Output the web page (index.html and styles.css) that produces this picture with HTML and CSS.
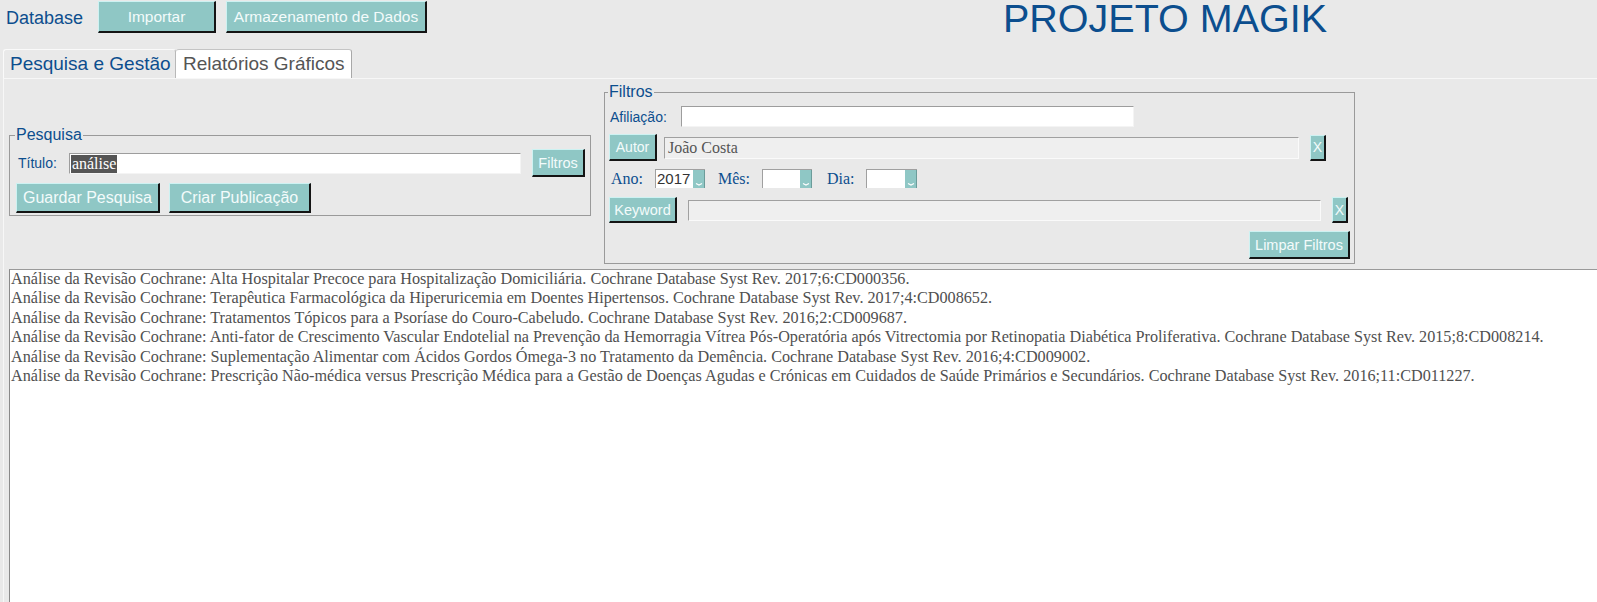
FILE: index.html
```html
<!DOCTYPE html>
<html lang="pt">
<head>
<meta charset="utf-8">
<title>Projeto Magik</title>
<link rel="stylesheet" href="styles.css">
</head>
<body>
<div class="topbar">
  <span class="brand">Database</span>
  <button class="btn btn-top btn-import">Importar</button>
  <button class="btn btn-top btn-store">Armazenamento de Dados</button>
  <h1 class="title">PROJETO MAGIK</h1>
</div>
<div class="tabs">
  <div class="tab tab-active">Pesquisa e Gestão</div>
  <div class="tab tab-other">Relatórios Gráficos</div>
</div>
<div class="panel">
  <div class="forms">
    <fieldset class="box box-search">
      <legend class="legend">Pesquisa</legend>
      <div class="row row-title">
        <span class="lbl lbl-title">Título:</span>
        <div class="field field-title"><span class="sel-text">análise</span></div>
        <button class="btn btn-filtros">Filtros</button>
      </div>
      <div class="row row-actions">
        <button class="btn btn-save">Guardar Pesquisa</button>
        <button class="btn btn-create">Criar Publicação</button>
      </div>
    </fieldset>
    <fieldset class="box box-filters">
      <legend class="legend">Filtros</legend>
      <div class="row row-afil">
        <span class="lbl lbl-afil">Afiliação:</span>
        <div class="field field-afil"></div>
      </div>
      <div class="row row-autor">
        <button class="btn btn-autor">Autor</button>
        <div class="field field-grey field-autor">João Costa</div>
        <button class="btn btn-x btn-x1">X</button>
      </div>
      <div class="row row-date">
        <span class="slbl slbl-ano">Ano:</span>
        <div class="select"><span class="select-val">2017</span><span class="select-arrow"><svg width="12" height="17" viewBox="0 0 12 17"><path d="M3 13.5 L6 15 L9 13.5" fill="none" stroke="#ffffff" stroke-width="1.2"/></svg></span></div>
        <span class="slbl slbl-mes">Mês:</span>
        <div class="select"><span class="select-val"></span><span class="select-arrow"><svg width="12" height="17" viewBox="0 0 12 17"><path d="M3 13.5 L6 15 L9 13.5" fill="none" stroke="#ffffff" stroke-width="1.2"/></svg></span></div>
        <span class="slbl slbl-dia">Dia:</span>
        <div class="select select-dia"><span class="select-val"></span><span class="select-arrow"><svg width="12" height="17" viewBox="0 0 12 17"><path d="M3 13.5 L6 15 L9 13.5" fill="none" stroke="#ffffff" stroke-width="1.2"/></svg></span></div>
      </div>
      <div class="row row-kw">
        <button class="btn btn-kw">Keyword</button>
        <div class="field field-grey field-kw"></div>
        <button class="btn btn-x btn-x2">X</button>
      </div>
      <div class="row row-clear">
        <button class="btn btn-clear">Limpar Filtros</button>
      </div>
    </fieldset>
  </div>
  <div class="results">
    <div class="res-line">Análise da Revisão Cochrane: Alta Hospitalar Precoce para Hospitalização Domiciliária. Cochrane Database Syst Rev. 2017;6:CD000356.</div>
    <div class="res-line">Análise da Revisão Cochrane: Terapêutica Farmacológica da Hiperuricemia em Doentes Hipertensos. Cochrane Database Syst Rev. 2017;4:CD008652.</div>
    <div class="res-line">Análise da Revisão Cochrane: Tratamentos Tópicos para a Psoríase do Couro-Cabeludo. Cochrane Database Syst Rev. 2016;2:CD009687.</div>
    <div class="res-line">Análise da Revisão Cochrane: Anti-fator de Crescimento Vascular Endotelial na Prevenção da Hemorragia Vítrea Pós-Operatória após Vitrectomia por Retinopatia Diabética Proliferativa. Cochrane Database Syst Rev. 2015;8:CD008214.</div>
    <div class="res-line">Análise da Revisão Cochrane: Suplementação Alimentar com Ácidos Gordos Ómega-3 no Tratamento da Demência. Cochrane Database Syst Rev. 2016;4:CD009002.</div>
    <div class="res-line">Análise da Revisão Cochrane: Prescrição Não-médica versus Prescrição Médica para a Gestão de Doenças Agudas e Crónicas em Cuidados de Saúde Primários e Secundários. Cochrane Database Syst Rev. 2016;11:CD011227.</div>
  </div>
</div>
</body>
</html>
```
FILE: styles.css
```css
html, body {
  margin: 0;
  padding: 0;
  height: 100%;
  overflow: hidden;
}
body {
  background: #e9e9e9;
  font-family: "Liberation Sans", Arial, sans-serif;
  color: #0c4e8e;
  display: flex;
  flex-direction: column;
}

/* top bar */
.topbar {
  display: flex;
  align-items: flex-start;
  height: 36px;
}
.brand {
  font-size: 18px;
  line-height: 20px;
  margin: 8px 0 0 6px;
  width: 78px;
  color: #0c4e8e;
}
.btn {
  font-family: "Liberation Sans", Arial, sans-serif;
  background: #8fc7c5;
  color: #f3fbfb;
  border-style: solid;
  border-width: 1px 2px 2px 1px;
  border-color: #cdf2f2 #141414 #141414 #cdf2f2;
  padding: 0;
  margin: 0;
  cursor: default;
  box-sizing: border-box;
  white-space: nowrap;
}
.btn-top {
  height: 32px;
  margin-top: 1px;
  font-size: 15.5px;
}
.btn-import {
  margin-left: 14px;
  width: 118px;
}
.btn-store {
  margin-left: 10px;
  width: 201px;
}
.title {
  margin: -4px 0 0 576px;
  font-weight: normal;
  font-size: 39.5px;
  line-height: 45px;
  color: #0c4e8e;
  white-space: nowrap;
}

/* tabs */
.tabs {
  display: flex;
  margin-top: 13px;
  padding-left: 3px;
  height: 29px;
}
.tab {
  box-sizing: border-box;
  height: 29px;
  font-size: 19px;
  line-height: 28px;
  border-radius: 3px 3px 0 0;
  white-space: nowrap;
}
.tab-active {
  width: 173px;
  padding-left: 6px;
  color: #0c4e8e;
  border-top: 1px solid #fafafa;
  border-left: 1px solid #fafafa;
  border-right: 1px solid #b8b8b8;
}
.tab-other {
  width: 176px;
  padding-left: 7px;
  background: #ffffff;
  color: #555555;
  border-top: 1px solid #c4c4c4;
  border-right: 1px solid #a8a8a8;
}

/* panel */
.panel {
  flex: 1;
  display: flex;
  flex-direction: column;
  margin-left: 3px;
  border-left: 1px solid #f7f7f7;
  border-top: 1px solid #f7f7f7;
  padding: 4px 0 0 5px;
}
.forms {
  display: flex;
  align-items: flex-start;
}
.box {
  box-sizing: border-box;
  margin: 0;
  border: 1px solid #9a9a9a;
  min-width: 0;
}
.legend {
  font-size: 16px;
  line-height: 18px;
  padding: 0 1px;
  margin-left: -1px;
  color: #0c4e8e;
}
.row {
  display: flex;
  align-items: center;
}
.lbl {
  font-size: 14px;
  color: #0c4e8e;
  white-space: nowrap;
}
.field {
  box-sizing: border-box;
  height: 21px;
  background: #ffffff;
  border-style: solid;
  border-width: 1px;
  border-color: #9d9d9d #f4f4f4 #f4f4f4 #9d9d9d;
}
.field-grey {
  background: #efefef;
  border-color: #a0a0a0 #fafafa #fafafa #a0a0a0;
}

/* search box */
.box-search {
  width: 582px;
  margin-top: 43px;
  padding: 5px 5px 2px 6px;
}
.row-title {
  height: 28px;
}
.lbl-title {
  margin-left: 2px;
  width: 51px;
}
.field-title {
  width: 453px;
  padding: 1px 0 0 1px;
}
.sel-text {
  display: inline-block;
  background: #555555;
  color: #ffffff;
  font-family: "Liberation Serif", Georgia, serif;
  font-size: 16px;
  line-height: 18px;
  padding: 0 1px;
}
.btn-filtros {
  margin-left: 11px;
  width: 53px;
  height: 28px;
  font-size: 14.5px;
}
.row-actions {
  margin-top: 6px;
}
.btn-save {
  width: 144px;
  height: 30px;
  font-size: 16px;
}
.btn-create {
  margin-left: 9px;
  width: 142px;
  height: 30px;
  font-size: 16px;
}

/* filters box */
.box-filters {
  width: 751px;
  margin-left: 13px;
  padding: 5px 4px 4px 4px;
}
.row-afil {
  height: 21px;
}
.lbl-afil {
  margin-left: 1px;
  width: 71px;
}
.field-afil {
  width: 453px;
}
.row-autor {
  margin-top: 7px;
  height: 27px;
}
.btn-autor {
  width: 48px;
  height: 27px;
  font-size: 14px;
}
.field-autor {
  margin-left: 7px;
  width: 635px;
  height: 22px;
  font-family: "Liberation Serif", Georgia, serif;
  font-size: 16px;
  line-height: 19px;
  color: #555555;
  padding-left: 3px;
}
.btn-x {
  width: 16px;
  height: 26px;
  font-size: 14px;
}
.btn-x1 {
  margin-left: 11px;
}
.row-date {
  margin-top: 8px;
  height: 19px;
}
.slbl {
  font-family: "Liberation Serif", Georgia, serif;
  font-size: 16px;
  color: #0c4e8e;
  white-space: nowrap;
}
.slbl-ano {
  margin-left: 2px;
  width: 44px;
}
.slbl-mes {
  margin-left: 13px;
  width: 44px;
}
.slbl-dia {
  margin-left: 15px;
  width: 39px;
}
.select {
  box-sizing: border-box;
  width: 50px;
  height: 19px;
  display: flex;
  background: #ffffff;
  border-style: solid;
  border-width: 1px 0 0 1px;
  border-color: #a0a0a0;
}
.select-dia {
  width: 51px;
}
.select-val {
  flex: 1;
  font-size: 15px;
  line-height: 17px;
  color: #333333;
  padding-left: 1px;
}
.select-arrow {
  width: 12px;
  height: 18px;
  background: #8fc7c5;
  border-right: 1px solid #6c9c9a;
  box-sizing: border-box;
}
.select-arrow svg {
  display: block;
}
.row-kw {
  margin-top: 9px;
  height: 26px;
}
.btn-kw {
  width: 68px;
  height: 26px;
  font-size: 14.5px;
}
.field-kw {
  margin-left: 11px;
  width: 633px;
}
.btn-x2 {
  margin-left: 11px;
}
.row-clear {
  margin-top: 8px;
  justify-content: flex-end;
}
.btn-clear {
  width: 101px;
  height: 28px;
  font-size: 14.5px;
}

/* results */
.results {
  flex: 1;
  margin-top: 5px;
  background: #ffffff;
  border-top: 1px solid #9a9a9a;
  border-left: 1px solid #8a8a8a;
  padding-left: 1px;
  font-family: "Liberation Serif", Georgia, serif;
  font-size: 16.2px;
  line-height: 19.4px;
  color: #505050;
}
.res-line {
  white-space: nowrap;
}
```
